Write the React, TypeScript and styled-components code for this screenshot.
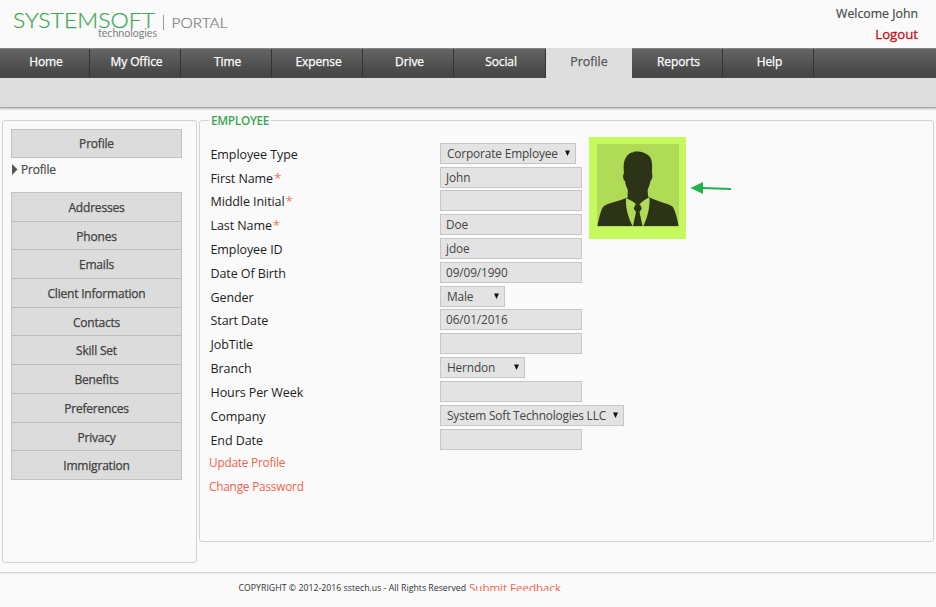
import React from 'react';
import styled, { createGlobalStyle } from 'styled-components';

const GlobalStyle = createGlobalStyle`
  * { box-sizing: border-box; }
  body {
    margin: 0;
    background: #fafafa;
    color: #333;
    font-family: 'Open Sans', sans-serif;
    font-size: 12.8px;
    overflow: hidden;
  }
`;

const Page = styled.div`
  display: flex;
  flex-direction: column;
  width: 936px;
  height: 607px;
  overflow: hidden;
`;

const Header = styled.header`
  display: flex;
  justify-content: space-between;
  height: 48px;
  padding-right: 18px;
`;

const Logo = styled.svg`
  display: block;
  width: 240px;
  height: 48px;
`;

const Account = styled.div`
  display: flex;
  flex-direction: column;
  align-items: flex-end;
  padding-top: 4px;
  line-height: 20px;
  color: #4a4a4a;
`;

const Welcome = styled.span`
  font-size: 12.3px;
  -webkit-text-stroke: 0.2px currentColor;
`;

const Logout = styled.a`
  color: #cc0d16;
  font-size: 13.2px;
  -webkit-text-stroke: 0.3px #cc0d16;
`;

const Nav = styled.nav`
  display: flex;
  height: 30px;
  border-top: 1px solid #858585;
  background: linear-gradient(#646464, #424242);
`;

const NavItem = styled.a<{ $width: number; $active?: boolean }>`
  width: ${(p) => p.$width}px;
  height: ${(p) => (p.$active ? 30 : 29)}px;
  margin-top: ${(p) => (p.$active ? -1 : 0)}px;
  padding-left: ${(p) => (p.$active ? 0 : 3)}px;
  border-right: ${(p) => (p.$active ? 'none' : '1px solid #343434')};
  background: ${(p) => (p.$active ? '#dedede' : 'transparent')};
  color: ${(p) => (p.$active ? '#555' : '#fff')};
  -webkit-text-stroke: 0.25px currentColor;
  font-size: ${(p) => (p.$active ? 12.4 : 12)}px;
  letter-spacing: ${(p) => (p.$active ? 0 : -0.1)}px;
  line-height: ${(p) => (p.$active ? 28 : 25)}px;
  text-align: center;
`;

const SubBar = styled.div`
  height: 30px;
  flex: none;
  background: #dedede;
  border-bottom: 1px solid #a5a5a5;
  box-shadow: 0 1px 2px #bbb;
`;

const Body = styled.main`
  display: flex;
  align-items: flex-start;
  gap: 2px;
  height: 464px;
  padding: 12px 2px 0 2px;
`;

const Sidebar = styled.aside`
  width: 195px;
  height: 443px;
  padding: 8px 14px 0 8px;
  border: 1px solid #d2d2d2;
  border-radius: 3px;
  font-size: 12px;
  letter-spacing: -0.2px;
`;

const SideButton = styled.a`
  display: block;
  height: 29px;
  border: 1px solid #c2c2c2;
  background: #dcdcdc;
  color: #404040;
  line-height: 28px;
  text-align: center;
  -webkit-text-stroke: 0.25px currentColor;
`;

const Current = styled.div`
  display: flex;
  align-items: center;
  gap: 3px;
  height: 22px;
  margin-bottom: 12px;
  padding-left: 1px;
  color: #4a4a4a;
  -webkit-text-stroke: 0.2px currentColor;
`;

const SideMenu = styled.div`
  border: 1px solid #c2c2c2;
  background: #dcdcdc;
`;

const SideItem = styled.a`
  display: block;
  height: 28.7px;
  border-bottom: 1px solid #bcbcbc;
  color: #404040;
  line-height: 29px;
  text-align: center;
  -webkit-text-stroke: 0.25px currentColor;
  &:last-child {
    height: 28px;
    border-bottom: none;
  }
`;

const Panel = styled.fieldset`
  width: 735px;
  height: 429px;
  min-width: 0;
  margin: -7px 0 0;
  padding: 0 0 0 9px;
  border: 1px solid #d2d2d2;
  border-radius: 3px;
`;

const Legend = styled.legend`
  padding: 0 2px;
  color: #3da650;
  font-size: 11.8px;
  font-weight: 600;
  letter-spacing: -0.3px;
  line-height: 15px;
`;

const Content = styled.div`
  display: flex;
  align-items: flex-start;
  padding-top: 14px;
`;

const Fields = styled.div`
  width: 380px;
  padding-top: 0.7px;
`;

const Row = styled.div`
  display: grid;
  grid-template-columns: 229.5px 149px;
  height: 23.83px;
  padding-left: 1.5px;
`;

const Label = styled.label`
  line-height: 23px;
  color: #222;
  font-size: 12.5px;
  letter-spacing: -0.08px;
  white-space: nowrap;
`;

const Star = styled.span`
  margin-left: 1px;
  color: #ee7650;
  font-size: 13.5px;
  line-height: 1;
`;

const Control = styled.div<{ $width: number; $select?: boolean }>`
  display: flex;
  align-items: center;
  justify-content: space-between;
  width: ${(p) => p.$width}px;
  height: 21px;
  padding: 0 ${(p) => (p.$select ? 4 : 5)}px 0 ${(p) => (p.$select ? 6 : 5)}px;
  border: 1px solid #c6c6c6;
  background: #e3e3e3;
  color: #444;
  font-size: ${(p) => (p.$select ? 11.9 : 11.8)}px;
  letter-spacing: ${(p) => (p.$select ? -0.17 : -0.1)}px;
  line-height: 19px;
  white-space: nowrap;
`;

const Link = styled.a`
  display: block;
  height: 23.83px;
  color: #f0644a;
  font-size: 11.8px;
  letter-spacing: -0.2px;
  line-height: 21px;
`;

const Photo = styled.div`
  width: 97px;
  height: 102px;
  margin-top: -5px;
  padding: 7px 8px;
  background: #c5f95f;
`;

const Arrow = styled.svg`
  display: block;
  width: 42px;
  height: 14px;
  margin: 39px 0 0 4px;
`;

const Footer = styled.footer`
  display: flex;
  align-items: flex-start;
  height: 35px;
  padding: 9px 0 0 238.5px;
  border-top: 1px solid #d5d5d5;
  box-shadow: inset 0 1px #ececec;
`;

const Copyright = styled.span`
  font-size: 8.77px;
  line-height: 12px;
  color: #333;
`;

const Feedback = styled.a`
  height: 9px;
  margin-left: 3px;
  overflow: hidden;
  color: #f0644a;
  font-size: 11.5px;
  line-height: 11px;
`;

const navItems = [
  { label: 'Home', width: 90 },
  { label: 'My Office', width: 91 },
  { label: 'Time', width: 91 },
  { label: 'Expense', width: 91 },
  { label: 'Drive', width: 91 },
  { label: 'Social', width: 92 },
  { label: 'Profile', width: 86, active: true },
  { label: 'Reports', width: 91 },
  { label: 'Help', width: 91 },
];

const sideItems = [
  'Addresses', 'Phones', 'Emails', 'Client Information', 'Contacts',
  'Skill Set', 'Benefits', 'Preferences', 'Privacy', 'Immigration',
];

type Field = { label: string; value?: string; required?: boolean; select?: number };

const fields: Field[] = [
  { label: 'Employee Type', value: 'Corporate Employee', select: 136 },
  { label: 'First Name', value: 'John', required: true },
  { label: 'Middle Initial', required: true },
  { label: 'Last Name', value: 'Doe', required: true },
  { label: 'Employee ID', value: 'jdoe' },
  { label: 'Date Of Birth', value: '09/09/1990' },
  { label: 'Gender', value: 'Male', select: 65 },
  { label: 'Start Date', value: '06/01/2016' },
  { label: 'JobTitle' },
  { label: 'Branch', value: 'Herndon', select: 85 },
  { label: 'Hours Per Week' },
  { label: 'Company', value: 'System Soft Technologies LLC', select: 184 },
  { label: 'End Date' },
];

const Brand = () => (
  <Logo viewBox="0 0 240 48" fontFamily="Lato, sans-serif">
    <text x="13" y="28" fontSize="21.5" fontWeight="300" fill="#3fa857" stroke="#3fa857" strokeWidth="0.25" textLength="142" lengthAdjust="spacingAndGlyphs">SYSTEMSOFT</text>
    <text x="98" y="36.500" fontSize="10.5" fill="#808080" textLength="59" lengthAdjust="spacingAndGlyphs">technologies</text>
    <rect x="163" y="15" width="1" height="15" fill="#999" />
    <text x="171.500" y="28" fontSize="14" fontWeight="300" fill="#777" stroke="#777" strokeWidth="0.2" textLength="56" lengthAdjust="spacingAndGlyphs">PORTAL</text>
  </Logo>
);

const Silhouette = () => (
  <svg width="82" height="83" viewBox="0 0 82 83" display="block">
    <rect width="82" height="83" fill="#b0db57" />
    <path
      fill="#2c3317"
      d="M0.500 82 C2 74 3.500 67 6 63 C9 59 21 58 29 54 L31 53 L31 46 C29 43 28.500 40 28 37 C26 36 25.500 31 27 29 C26 20 27 14 32 10 C35 7.500 37 9 37 7.500 C44 7 50 9 53 13 C56 18 55 24 55 29 C56 32 55 36 53.500 37 C53 40 52 43 50.500 46 L50.500 52 L52 53 C60 58 72 59 76 63 C79 69 80.500 76 81.500 82 Z"
    />
    <path fill="#b0db57" d="M29 54 L40.700 60 L52.500 53 C53 64 50.500 73 46.500 82 L35.500 82 C31 73 28.500 64 29 54 Z" />
    <path fill="#2c3317" d="M30.500 52 L40.700 62 L51 52 L50 44 L31 44 Z" />
    <path fill="#2c3317" d="M38.500 60.500 L43 60.500 L44.800 64.500 L42.500 68 L45.500 82 L36 82 L39 68 L36.700 64.500 Z" />
  </svg>
);

export default function App() {
  return (
    <Page>
      <GlobalStyle />
      <Header>
        <Brand />
        <Account>
          <Welcome>Welcome John</Welcome>
          <Logout>Logout</Logout>
        </Account>
      </Header>
      <Nav>
        {navItems.map((item) => (
          <NavItem key={item.label} $width={item.width} $active={item.active}>{item.label}</NavItem>
        ))}
      </Nav>
      <SubBar />
      <Body>
        <Sidebar>
          <SideButton>Profile</SideButton>
          <Current>
            <svg width="6" height="11" viewBox="0 0 6 11"><path d="M0 0 L5.500 5.500 L0 11 Z" fill="#555" /></svg>
            Profile
          </Current>
          <SideMenu>
            {sideItems.map((label) => <SideItem key={label}>{label}</SideItem>)}
          </SideMenu>
        </Sidebar>
        <Panel>
          <Legend>EMPLOYEE</Legend>
          <Content>
            <Fields>
              {fields.map((f) => (
                <Row key={f.label}>
                  <Label>{f.label}{f.required && <Star>*</Star>}</Label>
                  <Control $width={f.select ?? 142} $select={!!f.select}>
                    <span>{f.value}</span>
                    {f.select && (
                      <svg width="7" height="7" viewBox="0 0 7 7"><path d="M1 0.500 H6 L3.500 6 Z" fill="#111" /></svg>
                    )}
                  </Control>
                </Row>
              ))}
              <Link>Update Profile</Link>
              <Link>Change Password</Link>
            </Fields>
            <Photo><Silhouette /></Photo>
            <Arrow viewBox="0 0 42 14">
              <path d="M0.500 7 L13 1 V13 Z" fill="#22b14c" />
              <path d="M12 7 L41 8" stroke="#22b14c" strokeWidth="1.8" />
            </Arrow>
          </Content>
        </Panel>
      </Body>
      <Footer>
        <Copyright>COPYRIGHT © 2012-2016 sstech.us - All Rights Reserved</Copyright>
        <Feedback>Submit Feedback</Feedback>
      </Footer>
    </Page>
  );
}
